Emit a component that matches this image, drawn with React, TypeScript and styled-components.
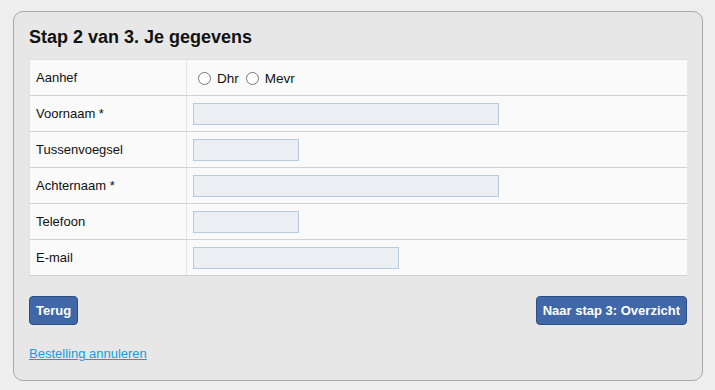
import styled, { createGlobalStyle } from "styled-components";

const GlobalStyle = createGlobalStyle`
  body {
    margin: 0;
    background: #eeeeee;
    font-family: "Liberation Sans", Arial, sans-serif;
    font-size: 13px;
    color: #111;
  }
`;

const fields = [
  { label: "Voornaam *", width: 306 },
  { label: "Tussenvoegsel", width: 106 },
  { label: "Achternaam *", width: 306 },
  { label: "Telefoon", width: 106 },
  { label: "E-mail", width: 206 },
];

function App() {
  return (
    <>
      <GlobalStyle />
      <Panel>
        <Title>Stap 2 van 3. Je gegevens</Title>
        <FormTable>
          <Row>
            <LabelCell>Aanhef</LabelCell>
            <FieldCell>
              <RadioLabel>
                <Radio type="radio" name="aanhef" />
                Dhr
              </RadioLabel>
              <RadioLabel>
                <Radio type="radio" name="aanhef" />
                Mevr
              </RadioLabel>
            </FieldCell>
          </Row>
          {fields.map((f) => (
            <Row key={f.label}>
              <LabelCell>{f.label}</LabelCell>
              <FieldCell>
                <TextInput type="text" $width={f.width} />
              </FieldCell>
            </Row>
          ))}
        </FormTable>
        <Actions>
          <Button>Terug</Button>
          <Button>Naar stap 3: Overzicht</Button>
        </Actions>
        <CancelLink href="#">Bestelling annuleren</CancelLink>
      </Panel>
    </>
  );
}

const Panel = styled.div`
  box-sizing: border-box;
  width: 690px;
  height: 370px;
  margin: 11px 0 0 13px;
  padding: 14px 15px 0 15px;
  background: #e7e7e7;
  border: 1px solid #a9a9a9;
  border-radius: 10px;
`;

const Title = styled.h2`
  margin: 0 0 10px 0;
  font-size: 18px;
  line-height: 23px;
  font-weight: bold;
  color: #111;
`;

const FormTable = styled.div`
  background: #fafafa;
  border-top: 1px solid #dcdcdc;
  border-left: 1px solid #e2e2e2;
  box-shadow: 0 1px 0 #cfcfcf;
`;

const Row = styled.div`
  display: grid;
  grid-template-columns: 157px 1fr;
  height: 35px;
  border-bottom: 1px solid #d2d2d2;

  &:last-child {
    border-bottom: none;
  }
`;

const LabelCell = styled.div`
  display: flex;
  align-items: center;
  padding-left: 6px;
  border-right: 1px solid #e6e6e6;
`;

const FieldCell = styled.div`
  display: flex;
  align-items: center;
  padding-left: 6px;
`;

const RadioLabel = styled.label`
  display: inline-flex;
  align-items: center;
  margin-top: 1px;
  margin-right: 2px;
  font-size: 13.5px;
`;

const Radio = styled.input`
  width: 13px;
  height: 13px;
  margin: 0 6px 0 5px;
`;

const TextInput = styled.input<{ $width: number }>`
  box-sizing: border-box;
  width: ${(p) => p.$width}px;
  height: 22px;
  background: #ebeff4;
  border: 1px solid #b6cbe0;
  border-radius: 0;
  outline: none;
`;

const Actions = styled.div`
  display: flex;
  justify-content: space-between;
  margin-top: 21px;
`;

const Button = styled.button`
  height: 29px;
  padding: 0 6px;
  background: #4068a9;
  border: 1px solid #2c4e85;
  border-radius: 4px;
  color: #fff;
  font-family: "Liberation Sans", Arial, sans-serif;
  font-size: 13px;
  font-weight: bold;
  cursor: pointer;
`;

const CancelLink = styled.a`
  display: inline-block;
  margin-top: 21px;
  color: #1f9ad6;
  font-size: 13px;
  text-decoration: underline;
`;

export default App;
